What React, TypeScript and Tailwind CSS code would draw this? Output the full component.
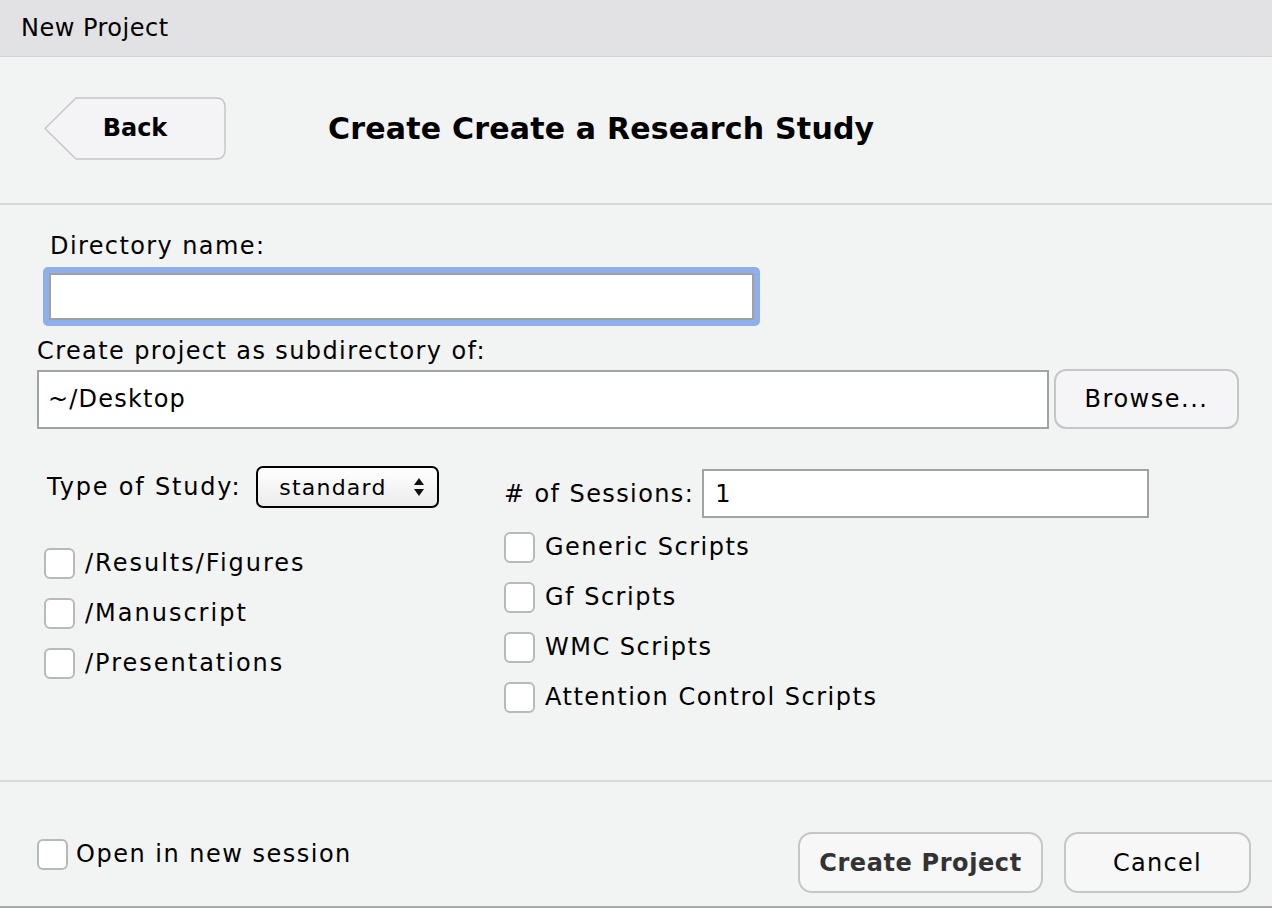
import React from "react";

const font = { fontFamily: '"DejaVu Sans", "Lucida Grande", Verdana, sans-serif' };

function Check({ label, track }: { label: string; track?: boolean }) {
  return (
    <label className="flex items-center h-[30px]">
      <span className="w-[31px] h-[31px] rounded-[6px] border-2 border-[#b9b9b9] bg-white shrink-0" />
      <span
        className={
          track
            ? "ml-[10px] text-[24px] tracking-[2px] text-black leading-none"
            : "ml-[10px] text-[24px] tracking-[1.5px] text-black leading-none"
        }
      >
        {label}
      </span>
    </label>
  );
}

export default function App() {
  return (
    <div className="w-[1272px] h-[908px] bg-[#f2f3f3] flex flex-col overflow-hidden" style={font}>
      {/* title bar */}
      <div className="h-[57px] bg-[#e2e2e4] border-b border-[#d4d4d6] flex items-center pl-[21px] shrink-0">
        <span className="text-[24px] tracking-[0.5px] text-black">New Project</span>
      </div>

      {/* header */}
      <div className="h-[148px] border-b-2 border-[#d6d6d6] flex items-center shrink-0 pl-[44px]">
        <button className="relative w-[182px] h-[63px] flex items-center justify-center mb-[4px]">
          <svg className="absolute inset-0" width="182" height="63" viewBox="0 0 182 63">
            <path
              d="M1 31.5 L32 1 H172 Q181 1 181 10 V53 Q181 62 172 62 H32 Z"
              fill="#f4f4f6"
              stroke="#c6c6c6"
              strokeWidth="1.5"
            />
          </svg>
          <span className="relative text-[24px] font-bold text-black">Back</span>
        </button>
        <h1 className="ml-[102px] text-[30px] tracking-[0.2px] font-bold text-black mb-[4px]">Create Create a Research Study</h1>
      </div>

      {/* content */}
      <div className="flex-1 border-b-2 border-[#d9d9d9] flex flex-col pl-[37px] pr-[32px]">
        <div className="mt-[27px] ml-[13px] text-[24px] tracking-[1.4px] leading-[28px] text-black">Directory name:</div>
        <div className="mt-[7px] ml-[6px] w-[717px] h-[59px] rounded-[5px] bg-[#8eaeec] p-[6px]">
          <div className="w-full h-full bg-white border-2 border-[#a0a0a0]" />
        </div>
        <div className="mt-[11px] text-[24px] tracking-[1.4px] leading-[28px] text-black">Create project as subdirectory of:</div>
        <div className="mt-[4px] flex items-center">
          <div className="w-[1012px] h-[59px] bg-white border-2 border-[#a2a2a2] flex items-center pl-[9px] text-[24px] tracking-[1.2px] text-black">
            ~/Desktop
          </div>
          <button className="ml-[5px] w-[185px] h-[60px] rounded-[12px] border-2 border-[#c6c6c6] bg-[#f5f5f7] text-[24px] tracking-[1.5px] text-black">
            Browse...
          </button>
        </div>

        <div className="mt-[37px] flex">
          {/* left column */}
          <div className="w-[467px] flex flex-col">
            <div className="flex items-center ml-[10px]">
              <span className="text-[24px] tracking-[1.8px] text-black">Type of Study:</span>
              <div className="ml-[15px] w-[183px] h-[42px] rounded-[7px] border-2 border-black bg-gradient-to-b from-[#ffffff] to-[#ececec] flex items-center pl-[21px] pr-[12px] justify-between">
                <span className="text-[22px] tracking-[1.2px] text-black">standard</span>
                <svg width="12" height="22" viewBox="0 0 12 22">
                  <path d="M6 2 L11 9 H1 Z" fill="#111" />
                  <path d="M6 20 L11 13 H1 Z" fill="#111" />
                </svg>
              </div>
            </div>
            <div className="mt-[40px] ml-[7px] flex flex-col gap-[20px]">
              <Check label="/Results/Figures" track />
              <Check label="/Manuscript" track />
              <Check label="/Presentations" track />
            </div>
          </div>
          {/* right column */}
          <div className="flex flex-col">
            <div className="flex items-center mt-[3px]">
              <span className="text-[24px] tracking-[1.4px] text-black">{"# of Sessions:"}</span>
              <div className="ml-[8px] w-[447px] h-[49px] bg-white border-2 border-[#a2a2a2] flex items-center pl-[11px] text-[24px] text-black">
                1
              </div>
            </div>
            <div className="mt-[14px] flex flex-col gap-[20px]">
              <Check label="Generic Scripts" />
              <Check label="Gf Scripts" />
              <Check label="WMC Scripts" />
              <Check label="Attention Control Scripts" />
            </div>
          </div>
        </div>
      </div>

      {/* footer */}
      <div className="h-[126px] shrink-0 border-b-2 border-[#a9a9a9] flex items-start pl-[37px] pr-[21px]">
        <div className="mt-[57px]">
          <label className="flex items-center h-[30px]">
            <span className="w-[31px] h-[31px] rounded-[6px] border-2 border-[#b9b9b9] bg-white shrink-0" />
            <span className="ml-[8px] text-[24px] tracking-[1.5px] text-black">Open in new session</span>
          </label>
        </div>
        <div className="ml-auto mt-[50px] flex gap-[21px]">
          <button className="w-[245px] h-[61px] rounded-[14px] border-2 border-[#c6c6c6] bg-[#f7f7f8] text-[24px] tracking-[0.6px] font-bold text-[#333]">
            Create Project
          </button>
          <button className="w-[187px] h-[61px] rounded-[14px] border-2 border-[#c6c6c6] bg-[#f7f7f8] text-[24px] tracking-[1.3px] text-black">
            Cancel
          </button>
        </div>
      </div>
    </div>
  );
}
